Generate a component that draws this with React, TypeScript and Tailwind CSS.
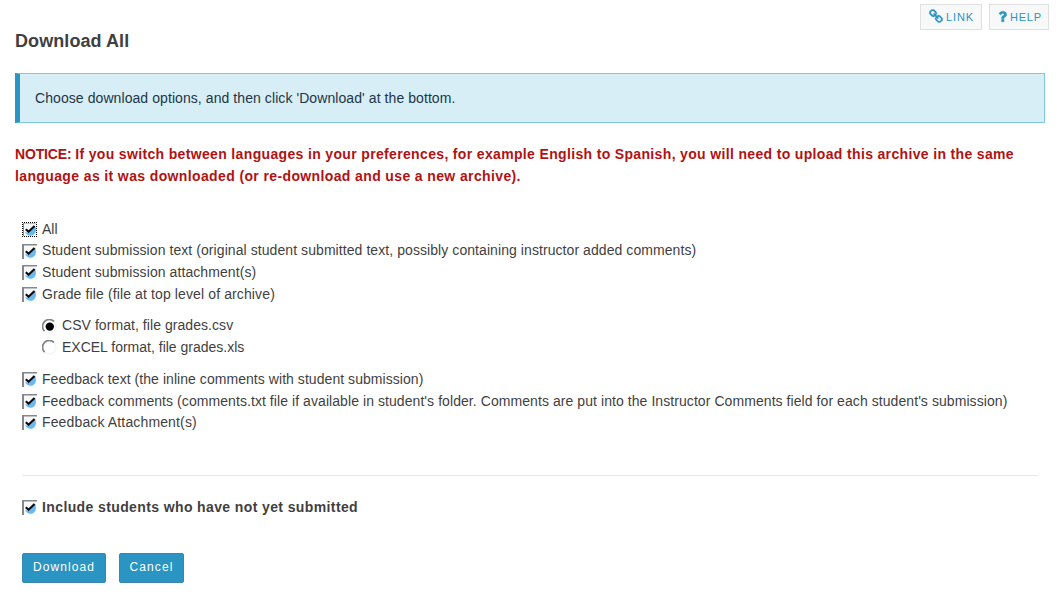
function CheckBox({ focused = false }: { focused?: boolean }) {
  return (
    <svg width="15" height="15" viewBox="0 0 15 15" className="block shrink-0">
      <rect width="15" height="15" fill="#f8f8f8" />
      <path d="M0 0H15V1.6H2V15H0Z" fill="#85878a" />
      <path d="M3 10 L7 11 L13.4 4.5 L14 8 Q13.5 13 9 13.8 Q5 14 3 10Z" fill="#68b9ef" />
      <path d="M3.8 7.2 L6.6 9.8 L12.6 4" fill="none" stroke="#080c14" strokeWidth="2.2" />
      {focused && (
        <>
          <rect x="0.5" y="0.5" width="14" height="14" fill="none" stroke="#fff" />
          <path
            d="M0 0.5H15M0 14.5H15M0.5 0V15M14.5 0V15"
            fill="none"
            stroke="#000"
            strokeDasharray="1 1"
          />
        </>
      )}
    </svg>
  );
}

function Radio({ selected = false }: { selected?: boolean }) {
  return (
    <svg width="15" height="15" viewBox="0 0 15 15" className="block shrink-0">
      <circle cx="7.5" cy="7.5" r="6.5" fill="#fff" stroke="#f3f3f3" strokeWidth="1.3" />
      <path d="M2.6 12.2A6.4 6.4 0 0 1 12 2.4" fill="none" stroke="#7f8583" strokeWidth="1.7" />
      {selected && <circle cx="7.8" cy="7.6" r="4.2" fill="#000" />}
    </svg>
  );
}

type Row = { text: string; cls: string; row: string; box?: string; focused?: boolean };

const topRows: Row[] = [
  { text: 'All', cls: '', row: 'h-[21px]', focused: true },
  {
    text: 'Student submission text (original student submitted text, possibly containing instructor added comments)',
    cls: 'tracking-[0.073px]',
    row: 'h-[22px]',
    box: 'pt-0.5',
  },
  { text: 'Student submission attachment(s)', cls: 'tracking-[0.08px]', row: 'h-[22px]' },
  { text: 'Grade file (file at top level of archive)', cls: 'tracking-[0.12px]', row: 'h-[22px]' },
];

const bottomRows: Row[] = [
  { text: 'Feedback text (the inline comments with student submission)', cls: 'tracking-[0.055px]', row: 'h-[22px]' },
  {
    text: "Feedback comments (comments.txt file if available in student's folder. Comments are put into the Instructor Comments field for each student's submission)",
    cls: 'tracking-[0.07px]',
    row: 'h-[21px]',
  },
  { text: 'Feedback Attachment(s)', cls: 'tracking-[0.14px]', row: 'h-[22px]' },
];

function Option({ text, cls, row, box = 'pt-px', focused }: Row) {
  return (
    <label className={`flex items-start gap-[5px] ${row}`}>
      <span className={box}><CheckBox focused={focused} /></span>
      <span className={`whitespace-nowrap leading-[16px] ${cls}`}>{text}</span>
    </label>
  );
}

const toolButton =
  'flex h-[26px] items-center border border-[#e0e0e0] bg-[#f7f9f9] text-[11px] text-[#2a94c3]';
const action =
  'h-[30px] rounded-[2px] border border-[#3c86ad] bg-[#2a94c3] pb-[2px] text-[12px] text-white';

export default function App() {
  return (
    <main className="h-[594px] w-[1059px] overflow-hidden bg-white font-['Liberation_Sans',Arial,sans-serif] text-[14px] text-[#3f3f3f]">
      <div className="flex h-[30px] justify-end gap-[7px] pr-[10px] pt-1">
        <button className={`${toolButton} w-[62px] gap-0.5 pl-2 tracking-[0.9px]`}>
          <svg width="15" height="15" viewBox="0 0 1792 1792" fill="#2a94c3" stroke="#2a94c3" strokeWidth="25" className="-mt-[2px]">
            <path d="M1456 1216q0-40-28-68l-208-208q-28-28-68-28-42 0-72 32 3 3 19 18.5t21.5 21.5 15 19 13 25.5 3.5 27.5q0 40-28 68t-68 28q-15 0-27.5-3.5t-25.5-13-19-15-21.5-21.5-18.5-19q-33 31-33 73 0 40 28 68l206 207q27 27 68 27 40 0 68-26l147-146q28-28 28-67zm-703-705q0-40-28-68l-206-207q-28-28-68-28-39 0-68 27l-147 146q-28 28-28 67 0 40 28 68l208 208q27 27 68 27 42 0 72-31-3-3-19-18.5t-21.5-21.5-15-19-13-25.5-3.5-27.5q0-40 28-68t68-28q15 0 27.5 3.5t25.5 13 19 15 21.5 21.5 18.5 19q33-31 33-73zm895 705q0 120-85 203l-147 146q-83 83-203 83-121 0-204-85l-206-207q-83-83-83-203 0-123 88-209l-88-88q-86 88-208 88-120 0-204-84l-208-208q-84-84-84-204t85-203l147-146q83-83 203-83 121 0 204 85l206 207q83 83 83 203 0 123-88 209l88 88q86-88 208-88 120 0 204 84l208 208q84 84 84 204z" />
          </svg>
          <span>LINK</span>
        </button>
        <button className={`${toolButton} w-[60px] gap-0.5 pl-2 tracking-[0.75px]`}>
          <svg width="10" height="15" viewBox="380 0 1152 1792" fill="#2a94c3" stroke="#2a94c3" strokeWidth="40" className="-mt-0.5">
            <path d="M1088 1256v240q0 16-12 28t-28 12h-240q-16 0-28-12t-12-28v-240q0-16 12-28t28-12h240q16 0 28 12t12 28zm316-600q0 54-15.5 101t-35 76.5-55 59.5-57.5 43.5-61 35.5q-41 23-68.5 65t-27.5 67q0 17-12 32.5t-28 15.5h-240q-15 0-25.5-18.5t-10.5-37.5v-45q0-83 65-156.5t143-108.5q59-27 84-56t25-76q0-42-46.5-74t-107.5-32q-65 0-108 29-35 25-107 115-13 16-31 16-12 0-25-8l-164-125q-13-10-15.5-25t5.5-28q160-266 464-266 80 0 161 31t146 83 106 127.5 41 158.5z" />
          </svg>
          <span>HELP</span>
        </button>
      </div>
      <h1 className="ml-[15px] h-[43px] text-[18px] font-bold leading-[22px] tracking-[0.08px]">Download All</h1>
      <div className="ml-[15px] flex h-[50px] w-[1030px] items-center border border-l-[5px] border-[#7fc8e2] border-l-[#2a94c3] bg-[#d8eef7] pl-[15px] text-[#1d3547]">
        <span className="tracking-[0.076px]">Choose download options, and then click 'Download' at the bottom.</span>
      </div>
      <p className="ml-[15px] h-[79px] whitespace-nowrap pt-5 font-bold leading-[22px] text-[#b11212]">
        <span className="tracking-[-0.15px]">NOTICE: </span>
        <span className="tracking-[0.343px]">If you switch between languages in your preferences, for example English to Spanish, you will need to upload this archive in the same</span>
        <br />
        <span className="tracking-[0.375px]">language as it was downloaded (or re-download and use a new archive).</span>
      </p>
      <section className="ml-[22px] mt-[19px] w-[1016px]">
        {topRows.map((r) => <Option key={r.text} {...r} />)}
        <div className="ml-5 mt-[9px] h-[54px]">
          <label className="flex h-[22px] gap-[5px] leading-[16px]">
            <span className="pt-0.5"><Radio selected /></span>
            <span className="tracking-[0.06px]">CSV format, file grades.csv</span>
          </label>
          <label className="flex h-[22px] gap-[5px] leading-[16px]">
            <span className="pt-px"><Radio /></span>
            <span>EXCEL format, file grades.xls</span>
          </label>
        </div>
        {bottomRows.map((r) => <Option key={r.text} {...r} />)}
        <hr className="mt-[39px] border-[#e8e8e8]" />
        <div className="mt-[23px] font-bold">
          <Option text="Include students who have not yet submitted" cls="tracking-[0.385px]" row="h-[22px]" />
        </div>
        <div className="mt-[32px] flex gap-[13px]">
          <button className={`${action} w-[84px] tracking-[1.1px]`}>Download</button>
          <button className={`${action} w-[65px] tracking-[1.1px]`}>Cancel</button>
        </div>
      </section>
    </main>
  );
}
